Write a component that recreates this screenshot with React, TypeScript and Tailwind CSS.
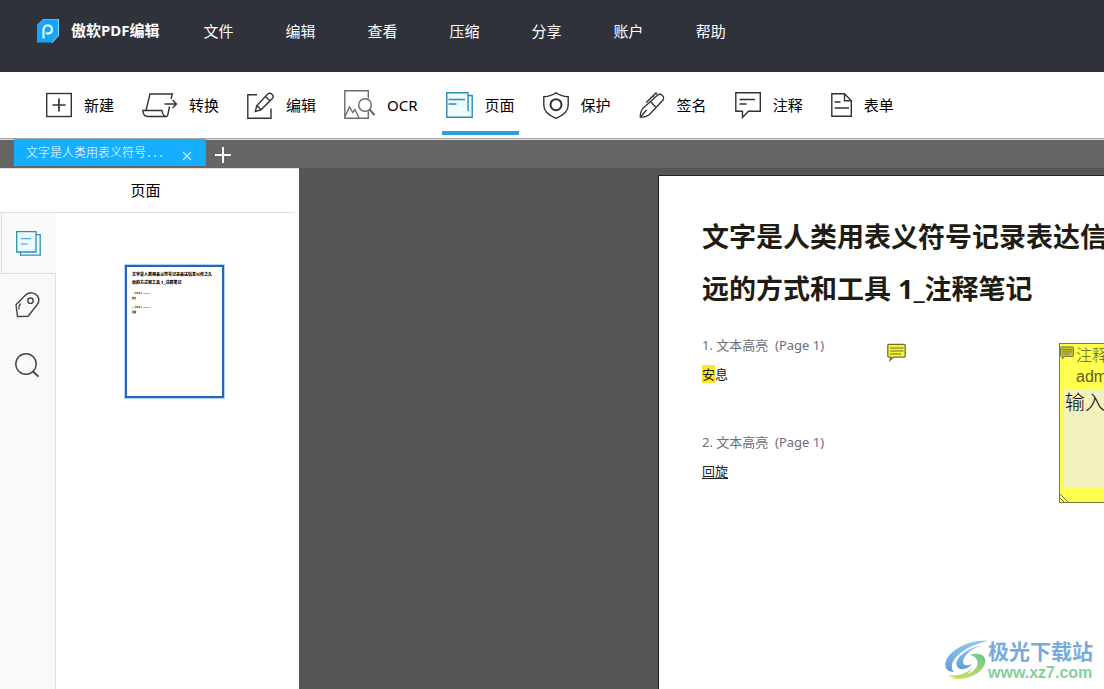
import { useState, type ReactNode } from "react";

const menus = ["文件", "编辑", "查看", "压缩", "分享", "账户", "帮助"];

const sansFont = "font-['Noto_Sans','Noto_Sans_CJK_SC',sans-serif]";

type Tool = { label: string; icon: ReactNode };

const tools: Tool[] = [
  {
    label: "新建",
    icon: (
      <svg width="26" height="26" viewBox="0 0 26 26" fill="none" stroke="#333" strokeWidth="1.4">
        <rect x="0.7" y="1.5" width="24.6" height="23" />
        <path d="M6.5 13h13M13 6.5v13" strokeWidth="1.7" />
      </svg>
    ),
  },
  {
    label: "转换",
    icon: (
      <svg width="35" height="26" viewBox="0 0 35 26" fill="none" stroke="#333" strokeWidth="1.4">
        <path d="M29 7l1.4-5H8L4 18.5M.8 18.5H20c.4 4 2 6 4.6 6H6c-3 0-5-2-5.2-6zM27.5 14.5l-1.6 8c-.2 1-.6 1.7-1.4 2" />
        <path d="M22.5 12h12M30.5 8l4 4-4 4" />
      </svg>
    ),
  },
  {
    label: "编辑",
    icon: (
      <svg width="27" height="27" viewBox="0 0 27 27" fill="none" stroke="#333" strokeWidth="1.4">
        <path d="M10 2.7H.8v23.5H24V16.5" />
        <path d="M8.3 19.5l1.5-6L21 1.8c2.6-2 6.5 1.8 4.6 4.4L14 17.8zM18.5 4.5l4.6 4.4M9.8 13.5l4.2 4.3" />
      </svg>
    ),
  },
  {
    label: "OCR",
    icon: (
      <svg width="31" height="30" viewBox="0 0 31 30" fill="none" stroke="#6b6b6b" strokeWidth="1.4">
        <path d="M24.3 8.5V.8H.8v27.5h23.5v-7" />
        <path d="M1 26.5l4.5-9.5 3.3 5.5 2.2-3 4 8.5" />
        <circle cx="21" cy="15" r="6.3" />
        <path d="M25.5 19.5l5 5.5" strokeWidth="2.2" />
      </svg>
    ),
  },
  {
    label: "页面",
    icon: (
      <svg width="27" height="27" viewBox="0 0 27 27" fill="#eefbff" stroke="#2f88b5" strokeWidth="1.4">
        <path d="M22 3.5h4.2v21.800H.8V.8H22v16.500c0 1 .4 1.500 1.200 1.700" />
        <path d="M2.5 7.500h16.500M2.500 12h8" strokeWidth="1.6" />
      </svg>
    ),
  },
  {
    label: "保护",
    icon: (
      <svg width="26" height="27" viewBox="0 0 26 27" fill="none" stroke="#333" strokeWidth="1.4">
        <path d="M13 .8c3 2.300 7 3.600 12.200 4v8.500c0 6-5 10.200-12.200 13C5.800 23.500.8 19.300.8 13.300V4.800C6 4.400 10 3.100 13 .8z" />
        <circle cx="13" cy="12.700" r="5.500" strokeWidth="2" />
      </svg>
    ),
  },
  {
    label: "签名",
    icon: (
      <svg width="26" height="26" viewBox="0 0 26 26" fill="none" stroke="#333" strokeWidth="1.3">
        <path d="M1.200 25.200c0-3.500.7-6.500 2.800-9L18.500 3.300c3-2.600 7.500.8 5.500 4.700L10.500 22.500c-2.500 2-5.500 2.700-9.300 2.700zM1.500 25l6-7M11.500 9.500l5.500 6" />
        <path d="M7.300 10.500L17 1l.8 1.500M13.500 3.500l1.300 1.500" strokeWidth="1.5" />
      </svg>
    ),
  },
  {
    label: "注释",
    icon: (
      <svg width="26" height="27" viewBox="0 0 26 27" fill="none" stroke="#333" strokeWidth="1.4">
        <path d="M.8.8h24.500v18.500H13.500l-6 6.200v-6.200H.8z" />
        <path d="M4.500 7.500h15.500M4.500 12h7" strokeWidth="1.6" />
      </svg>
    ),
  },
  {
    label: "表单",
    icon: (
      <svg width="21" height="24" viewBox="0 0 21 24" fill="none" stroke="#333" strokeWidth="1.4">
        <path d="M.8.8h12.700l6.800 7v15.400H.8zM13.500.8v7h6.800" />
        <path d="M3.500 9h6M3.500 15h14.500" strokeWidth="1.6" />
      </svg>
    ),
  },
];

const rail: Tool[] = [
  {
    label: "页面",
    icon: (
      <svg width="25" height="25" viewBox="0 0 25 25" fill="#e9fbff" stroke="#2f8fae" strokeWidth="1.3">
        <path d="M4.500 3.700h19.700v20.500H4.500z" />
        <path d="M.7.7h19.300v20.300H.7z" />
        <path d="M5 7.700h10M5 13.200h6.500" stroke="#5aa9cf" />
      </svg>
    ),
  },
  {
    label: "书签",
    icon: (
      <svg width="25" height="26" viewBox="0 0 25 26" fill="none" stroke="#444" strokeWidth="1.4">
        <path d="M1 12.800L10.500 3c4-3.500 9.500-2.500 12 1 1.800 2.800 1.500 6.500-.5 9L13 24.300 2.500 24.500z" />
        <circle cx="15.500" cy="8.700" r="2.700" />
        <path d="M5.500 11.500c-1.500 1.800-2 3.500-1.500 6" />
      </svg>
    ),
  },
  {
    label: "搜索",
    icon: (
      <svg width="25" height="25" viewBox="0 0 25 25" fill="none" stroke="#444" strokeWidth="1.4">
        <circle cx="11" cy="11" r="10.200" />
        <path d="M18 18.500l5.500 5.200" strokeWidth="1.8" />
      </svg>
    ),
  },
];

const entries = [
  { title: "1. 文本高亮  (Page 1)", mark: "highlight" },
  { title: "2. 文本高亮  (Page 1)", mark: "underline" },
];

function Header() {
  return (
    <header className="flex h-18 shrink-0 items-center bg-[#2f323b] pb-2.5 pl-[37px] text-white">
      <svg width="22" height="24" viewBox="0 0 22 24">
        <path d="M6 0h15.500v16.500L15 23.500H0V6z" fill="#12a5fb" />
        <path d="M6 0h15.500v16.500L15 23.500" fill="none" stroke="#7fd6ff" strokeWidth="1.2" />
        <path d="M0 6l6-6v6zM15 23.500v-7h6.500z" fill="#3b9fe0" />
        <path d="M6.500 19.500v-8.500c0-6 8.500-6 8.500-.5 0 4-4 4.500-6 3.500" fill="none" stroke="#d9fbff" strokeWidth="2.3" />
      </svg>
      <h1 className="ml-3 pb-0.5 text-[15px] font-bold whitespace-nowrap">傲软PDF编辑</h1>
      <nav className="ml-11 flex gap-[52px] text-[15px]">
        {menus.map((menu) => (
          <button key={menu} type="button" className="whitespace-nowrap">
            {menu}
          </button>
        ))}
      </nav>
    </header>
  );
}

function Toolbar() {
  const [active, setActive] = useState("页面");

  return (
    <div className="flex h-[67px] shrink-0 gap-5 border-b border-[#a6a6a6] bg-white pl-[42px]">
      {tools.map(({ label, icon }) => (
        <button
          key={label}
          type="button"
          onClick={() => setActive(label)}
          className={`flex h-[63px] items-center gap-3 border-b-4 px-1 pt-[7px] text-[15px] whitespace-nowrap text-black ${
            active === label ? "border-[#2a9fd8]" : "border-transparent"
          }`}
        >
          {icon}
          {label}
        </button>
      ))}
    </div>
  );
}

function TabBar() {
  return (
    <div className="flex h-[29px] shrink-0 items-start border-t border-[#dcdcdc] bg-[#666] pl-3.5">
      <div className="-mt-px flex h-[27px] w-48 items-center justify-between bg-[#16afff] pr-3.5 pl-3 text-white">
        <span className="pt-px text-xs font-light whitespace-nowrap">
          文字是人类用表义符号<span className="font-['Liberation_Mono',monospace] text-[10px]">...</span>
        </span>
        <button type="button" aria-label="关闭" className="pt-1.5">
          <svg width="10" height="10" viewBox="0 0 10 10" stroke="#c8f0ff" strokeWidth="1.1">
            <path d="M1 1l8 8M9 1L1 9" />
          </svg>
        </button>
      </div>
      <button type="button" aria-label="新建标签" className="ml-[9px] pt-[7px]">
        <svg width="16" height="16" viewBox="0 0 16 16" stroke="#fff" strokeWidth="2">
          <path d="M8 0v16M0 8h16" />
        </svg>
      </button>
    </div>
  );
}

function Thumbnail() {
  return (
    <button
      type="button"
      className="mt-[52px] flex h-[133px] w-[99px] flex-col items-start overflow-hidden border-2 border-[#1f69b8] bg-white px-[5px] pt-1 text-left ring-1 ring-[#b9d3f0]"
    >
      <span className="text-[4px] leading-[8px] font-black whitespace-nowrap text-black">
        文字是人类用表义符号记录表达信息以传之久
        <br />
        远的方式和工具 1_注释笔记
      </span>
      <span className="mt-1 text-[2px] leading-[5px] whitespace-pre text-black">
        {entries[0].title}
        <br />
        <b className="font-black">安息</b>
      </span>
      <span className="mt-1 text-[2px] leading-[5px] whitespace-pre text-black">
        {entries[1].title}
        <br />
        <b className="font-black">回旋</b>
      </span>
    </button>
  );
}

function Sidebar() {
  const [active, setActive] = useState("页面");

  return (
    <aside className="flex w-[299px] shrink-0 flex-col border-t border-[#e0e0e0] bg-white">
      <h2 className="mr-1 h-11 border-b border-[#dedede] pr-1 text-center text-[15px] leading-[42px] text-black">页面</h2>
      <div className="flex flex-1">
        <div className="flex w-14 flex-col bg-[#f9f9f9]">
          {rail.map(({ label, icon }) => (
            <button
              key={label}
              type="button"
              aria-label={label}
              onClick={() => setActive(label)}
              className={`flex h-[61px] items-center justify-center ${
                active === label ? "ml-px border-b border-l border-[#dedede] pr-0.5" : "border-r border-[#dedede]"
              }`}
            >
              {icon}
            </button>
          ))}
          <div className="flex-1 border-r border-[#dedede]" />
        </div>
        <div className="mr-1.5 flex flex-1 flex-col items-center">
          <Thumbnail />
        </div>
      </div>
    </aside>
  );
}

function NoteIcon({ size, muted }: { size: number; muted?: boolean }) {
  return (
    <svg width={size} height={size} viewBox="0 0 19 18" fill={muted ? "#c9c93a" : "#f5f52e"} stroke="#6e6e3c" strokeWidth="1.3">
      <path d="M2 .8h15q1.200 0 1.200 1.200v10.500q0 1.200-1.200 1.200H6.500L3 16.700l.8-3H2q-1.200 0-1.200-1.200V2Q.8.8 2 .8z" />
      <path d="M3 4.500h13.500M3 7.500h13.500M3 10.500h11" strokeWidth="1.2" />
    </svg>
  );
}

function NotePopup() {
  return (
    <section className="absolute top-[167px] left-[400px] flex h-40 w-[180px] flex-col border border-[#7d7d3a] bg-[#ffff4d] px-1">
      <div className="-ml-1 flex gap-0.5 text-base leading-[22px] text-[#5e5e1a]">
        <span className="pt-0.5">
          <NoteIcon size={14} muted />
        </span>
        <div>
          <div className="font-light">注释</div>
          <div className="font-['Liberation_Sans',sans-serif]">admin</div>
        </div>
      </div>
      <p className="mt-px h-[99px] bg-[#f2f2bf] pl-px text-xl leading-7 font-light text-black">输入</p>
      <svg className="-ml-1 mt-auto" width="8" height="8" viewBox="0 0 8 8" stroke="#6e6e3c">
        <path d="M0 0l8 8M0 4l4 4" />
      </svg>
    </section>
  );
}

function Document() {
  return (
    <main className="relative flex flex-1 overflow-hidden bg-[#555] pt-[7px] pl-[359px]">
      <article className="relative min-w-[600px] flex-1 border-t border-l border-[#222] bg-white px-[43px] pt-[35px] text-[13px] leading-[29px]">
        <h2 className="text-[27px] leading-[52px] font-bold whitespace-nowrap text-[#1f1c14]">
          文字是人类用表义符号记录表达信
          <br />
          远的方式和工具 1_注释笔记
        </h2>
        {entries.map(({ title, mark }) => (
          <section key={title} className="mt-4 mb-[39px]">
            <h3 className="whitespace-pre text-[#6a6e75]">{title}</h3>
            <p className="text-[#222]">
              {mark === "highlight" ? (
                <>
                  <mark className="bg-[#ffe52e] text-[#222]">安</mark>息
                </>
              ) : (
                <u className="underline-offset-2">回旋</u>
              )}
            </p>
          </section>
        ))}
        <span className="absolute top-[167px] left-[228px]">
          <NoteIcon size={19} />
        </span>
        <NotePopup />
      </article>
      <Watermark />
    </main>
  );
}

function Watermark() {
  return (
    <div className="absolute right-[11px] bottom-1.5 flex items-center">
      <svg width="43" height="42" viewBox="0 0 43 42">
        <defs>
          <linearGradient id="swoosh" x1="0" y1="0" x2="0" y2="1">
            <stop offset="0" stopColor="#8fc9ee" />
            <stop offset="1" stopColor="#5f9adb" />
          </linearGradient>
          <linearGradient id="leaf" x1="0" y1="1" x2="1" y2="0">
            <stop offset="0" stopColor="#e6e75a" />
            <stop offset="1" stopColor="#63c48c" />
          </linearGradient>
        </defs>
        <path d="M43 1C25-1 3 10 .5 23c-1 6 3 9 8.500 9C2 25 12 8 43 1z" fill="url(#swoosh)" />
        <path d="M37 5C20 9 9 19 12 26c2 5 10 4 15-2-5 2-9 2-9-2 0-6 8-13 19-17z" fill="url(#swoosh)" />
        <path d="M25 15c8-3 17 0 15 8C38 33 22 42 4 38c13 0 25-5 28-12 2-6-2-10-7-11z" fill="url(#leaf)" />
        <path d="M3 35c9 2 18-1 24-7-3 8-14 13-24 7z" fill="#a9d86e" />
      </svg>
      <div className="font-bold whitespace-nowrap">
        <div className="text-[21px] leading-6 text-[#78aadc]">极光下载站</div>
        <div className="font-['Liberation_Sans',sans-serif] text-base leading-5 text-[#82cf9d]">www.xz7.com</div>
      </div>
    </div>
  );
}

export default function App() {
  return (
    <div className={`flex h-screen flex-col overflow-hidden ${sansFont}`}>
      <Header />
      <Toolbar />
      <TabBar />
      <div className="flex min-h-0 flex-1">
        <Sidebar />
        <Document />
      </div>
    </div>
  );
}
